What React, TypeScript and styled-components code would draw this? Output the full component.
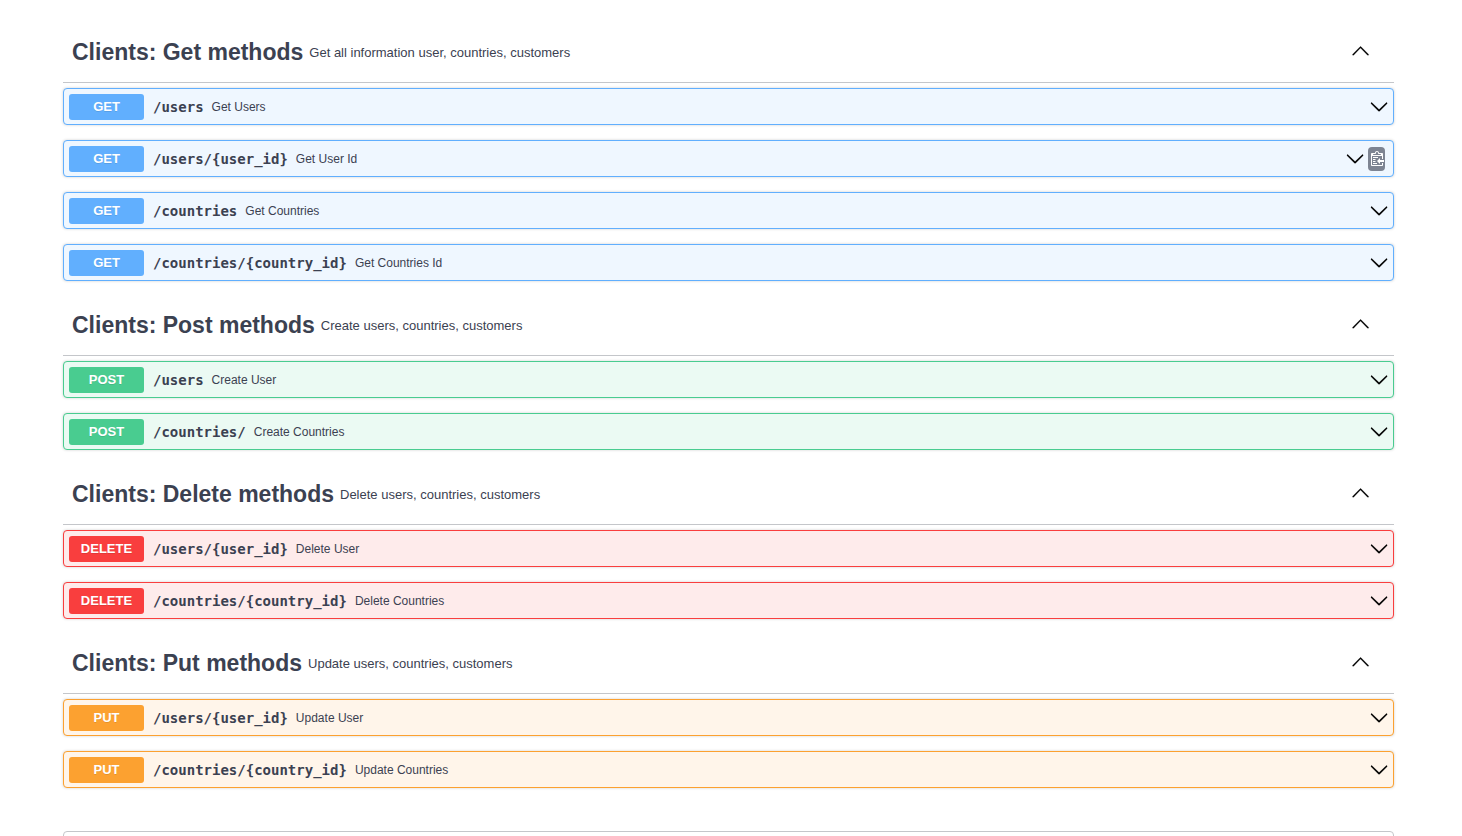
import React, { useState } from "react";
import styled, { createGlobalStyle } from "styled-components";

type Method = "GET" | "POST" | "DELETE" | "PUT";

interface Operation {
  path: string;
  summary: string;
  copy?: boolean;
}

interface Tag {
  name: string;
  description: string;
  method: Method;
  operations: Operation[];
}

const palette: Record<Method, { main: string; tint: string }> = {
  GET: { main: "#61affe", tint: "#eff7ff" },
  POST: { main: "#49cc90", tint: "#ebfaf3" },
  DELETE: { main: "#f93e3e", tint: "#feebeb" },
  PUT: { main: "#fca130", tint: "#fff5ea" },
};

const tags: Tag[] = [
  {
    name: "Clients: Get methods",
    description: "Get all information user, countries, customers",
    method: "GET",
    operations: [
      { path: "/users", summary: "Get Users" },
      { path: "/users/{user_id}", summary: "Get User Id", copy: true },
      { path: "/countries", summary: "Get Countries" },
      { path: "/countries/{country_id}", summary: "Get Countries Id" },
    ],
  },
  {
    name: "Clients: Post methods",
    description: "Create users, countries, customers",
    method: "POST",
    operations: [
      { path: "/users", summary: "Create User" },
      { path: "/countries/", summary: "Create Countries" },
    ],
  },
  {
    name: "Clients: Delete methods",
    description: "Delete users, countries, customers",
    method: "DELETE",
    operations: [
      { path: "/users/{user_id}", summary: "Delete User" },
      { path: "/countries/{country_id}", summary: "Delete Countries" },
    ],
  },
  {
    name: "Clients: Put methods",
    description: "Update users, countries, customers",
    method: "PUT",
    operations: [
      { path: "/users/{user_id}", summary: "Update User" },
      { path: "/countries/{country_id}", summary: "Update Countries" },
    ],
  },
];

const GlobalStyle = createGlobalStyle`
  *, *::before, *::after { box-sizing: border-box; }
  body {
    margin: 0;
    background: #fff;
    color: #3b4151;
    font-family: "Liberation Sans", Arial, sans-serif;
  }
  button { font: inherit; color: inherit; }
  #root { height: 100vh; overflow: hidden; }
`;

const Page = styled.main`
  display: flex;
  flex-direction: column;
  gap: 13px;
  padding: 21px 68px 0 63px;
`;

const TagSection = styled.section`
  display: flex;
  flex-direction: column;
  gap: 5px;
`;

const TagHeader = styled.header`
  display: flex;
  align-items: center;
  height: 62px;
  padding: 0 24px 0 9px;
  border-bottom: 1px solid #c4c6ca;
`;

const TagTitle = styled.h3`
  margin: 0;
  font-size: 23px;
  line-height: 28px;
  font-weight: 700;
`;

const TagDescription = styled.p`
  flex: 1;
  margin: 0;
  padding: 2px 0 0 6px;
  font-size: 13px;
  line-height: 18px;
`;

const IconButton = styled.button`
  display: flex;
  padding: 0;
  border: 0;
  background: none;
  cursor: pointer;
`;

const CollapseButton = styled(IconButton)`
  padding-bottom: 2px;
`;

const OperationList = styled.div`
  display: flex;
  flex-direction: column;
  gap: 15px;
`;

const OperationRow = styled.div<{ $method: Method }>`
  display: flex;
  align-items: center;
  height: 37px;
  padding: 0 5px;
  border: 1px solid ${(p) => palette[p.$method].main};
  border-radius: 4px;
  background: ${(p) => palette[p.$method].tint};
  box-shadow: 0 0 3px rgba(0, 0, 0, 0.19);
`;

const OperationButton = styled.button`
  display: flex;
  flex: 1;
  align-items: center;
  min-width: 0;
  padding: 0;
  border: 0;
  background: none;
  text-align: left;
  cursor: pointer;
`;

const MethodBadge = styled.span<{ $method: Method }>`
  width: 75px;
  border-radius: 3px;
  background: ${(p) => palette[p.$method].main};
  color: #fff;
  font-size: 13px;
  line-height: 26px;
  font-weight: 700;
  text-align: center;
  text-shadow: 0 1px 0 rgba(0, 0, 0, 0.1);
`;

const Path = styled.span`
  padding: 0 8px 0 9px;
  font-family: "DejaVu Sans Mono", monospace;
  font-size: 14px;
  line-height: 18px;
  font-weight: 700;
`;

const Summary = styled.span`
  flex: 1;
  font-size: 12px;
  line-height: 16px;
`;

const CopyButton = styled(IconButton)`
  align-items: center;
  justify-content: center;
  width: 17px;
  height: 24px;
  margin: 0 3px 0 4px;
  border-radius: 4px;
  background: #7d8492;
`;

const SchemaPanel = styled.section`
  height: 60px;
  margin-top: 30px;
  border: 1px solid #c4c6ca;
  border-radius: 4px;
`;

const Chevron = ({ up = false }: { up?: boolean }) => (
  <svg width="19" height="19" viewBox="0 0 20 20" aria-hidden="true">
    <path
      fill="#000"
      stroke="#000"
      strokeWidth="0.2"
      d={
        up
          ? "M17.418 14.908c.272.281.709.281.979 0s.271-.741 0-1.023l-7.83-7.908c-.271-.28-.709-.28-.979 0l-7.83 7.908c-.27.282-.27.742 0 1.023s.709.281.979 0L10 7.325z"
          : "M18.018 6.109c.272-.268.709-.268.979 0s.271.701 0 .969l-7.908 7.83c-.27.268-.707.268-.979 0l-7.908-7.83c-.27-.268-.27-.701 0-.969s.709-.268.979 0L10.600 13.250z"
      }
    />
  </svg>
);

const CopyIcon = () => (
  <svg width="15" height="16" viewBox="0 0 15 16" aria-hidden="true">
    <g transform="translate(2 -1)">
      <path
        fill="#fff"
        d="M2 13h4v1H2v-1zm5-6H2v1h5V7zm2 3V8l-3 3 3 3v-2h5v-2H9zM4.500 9H2v1h2.500V9zM2 12h2.500v-1H2v1zm9 1h1v2c-.020.280-.110.520-.300.700-.190.180-.420.280-.700.300H1c-.550 0-1-.450-1-1V4c0-.550.450-1 1-1h3c0-1.110.890-2 2-2 1.110 0 2 .890 2 2h3c.550 0 1 .450 1 1v5h-1V6H1v9h10v-2zM2 5h8c0-.550-.450-1-1-1H8c-.550 0-1-.450-1-1s-.450-1-1-1-1 .450-1 1-.450 1-1 1H3c-.550 0-1 .450-1 1z"
      />
    </g>
  </svg>
);

export default function App() {
  const [closed, setClosed] = useState<string[]>([]);
  const toggle = (name: string) =>
    setClosed((c) => (c.includes(name) ? c.filter((n) => n !== name) : [...c, name]));

  return (
    <>
      <GlobalStyle />
      <Page>
        {tags.map((tag) => {
          const open = !closed.includes(tag.name);
          return (
            <TagSection key={tag.name}>
              <TagHeader>
                <TagTitle>{tag.name}</TagTitle>
                <TagDescription>{tag.description}</TagDescription>
                <CollapseButton
                  aria-label={open ? "Collapse operation" : "Expand operation"}
                  aria-expanded={open}
                  onClick={() => toggle(tag.name)}
                >
                  <Chevron up={open} />
                </CollapseButton>
              </TagHeader>
              {open && (
                <OperationList>
                  {tag.operations.map((op) => (
                    <OperationRow key={op.path} $method={tag.method}>
                      <OperationButton>
                        <MethodBadge $method={tag.method}>{tag.method}</MethodBadge>
                        <Path>{op.path}</Path>
                        <Summary>{op.summary}</Summary>
                        <Chevron />
                      </OperationButton>
                      {op.copy && (
                        <CopyButton aria-label="Copy to clipboard">
                          <CopyIcon />
                        </CopyButton>
                      )}
                    </OperationRow>
                  ))}
                </OperationList>
              )}
            </TagSection>
          );
        })}
        <SchemaPanel aria-label="Schemas" />
      </Page>
    </>
  );
}
